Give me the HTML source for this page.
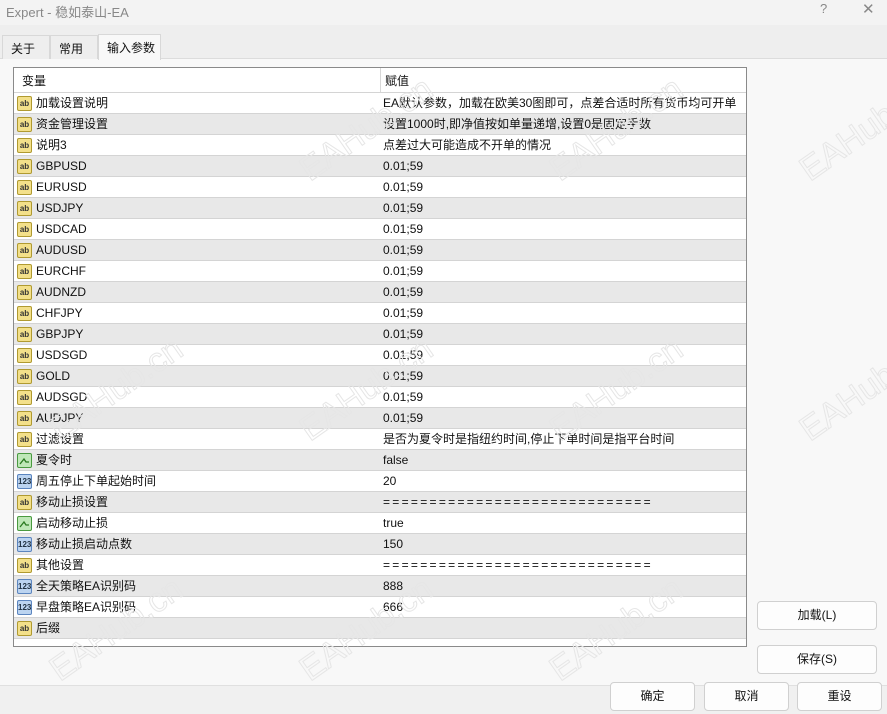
<!DOCTYPE html>
<html><head><meta charset="utf-8"><style>
*{margin:0;padding:0;box-sizing:border-box}
body{width:887px;height:714px;overflow:hidden;background:#f8f8f8;font-family:"Liberation Sans","Noto Sans CJK SC",sans-serif;font-size:12px;color:#111;position:relative}
.title{position:absolute;left:0;top:0;width:887px;height:25px;background:#f3f3f3;color:#888;font-size:13px;padding:2px 0 0 6px}
.tabbar{position:absolute;left:0;top:25px;width:887px;height:34px;background:#eeeeee;border-bottom:1px solid #dcdcdc}
.tab{position:absolute;top:10px;height:24px;border:1px solid #d8d8d8;border-bottom:none;background:#eeeeee;padding:4px 0 0 8px;font-size:12px}
.tab.on{background:#f8f8f8;top:9px;height:26px}
.tbl{position:absolute;left:13px;top:67px;width:734px;height:580px;border:1px solid #8a8a8a;background:#fff;overflow:hidden}
.row{position:absolute;left:0;width:732px;height:21px;border-bottom:1px solid #d4d4d4}
.row.g{background:#e8e8e8}
.n{position:absolute;left:22px;top:0;line-height:20px;white-space:nowrap}
.v{position:absolute;left:369px;top:0;line-height:20px;white-space:nowrap}
.eq{letter-spacing:2.3px}
.ic{position:absolute;left:3px;top:3px;width:15px;height:15px;border-radius:2px;font-size:8px;line-height:14px;text-align:center;font-weight:bold}
.ab{background:#f3e08a;border:1px solid #b09a30;color:#333}
.nm{background:#bcd4f0;border:1px solid #5b85bf;color:#234}
.bo{background:#bfe8b8;border:1px solid #4a9a40}
.hd{position:absolute;top:0;line-height:26px}
.vsep{position:absolute;left:366px;top:0;width:1px;height:24px;background:#d8d8d8}
.btn{position:absolute;height:29px;background:#fdfdfd;border:1px solid #d0d0d0;border-radius:4px;text-align:center;line-height:27px;font-size:12px}
.bottom{position:absolute;left:0;top:685px;width:887px;height:29px;background:#f0f0f0;border-top:1px solid #e0e0e0}
.wm{position:absolute;color:transparent;-webkit-text-stroke:1px #e6e6e6;font-size:34px;transform:rotate(-35deg);white-space:nowrap;font-family:"Liberation Sans",sans-serif}
</style></head><body>
<div class="title">Expert - 稳如泰山-EA<span style="position:absolute;left:820px;top:1px">?</span><span style="position:absolute;left:862px;top:0;font-size:15px">✕</span></div>
<div class="tabbar">
<div class="tab" style="left:2px;width:48px">关于</div>
<div class="tab" style="left:50px;width:48px">常用</div>
<div class="tab on" style="left:98px;width:63px">输入参数</div>
</div>
<div class="tbl">
<div class="row" style="top:0;height:25px;border-bottom:1px solid #d4d4d4"><span class="hd" style="left:8px">变量</span><div class="vsep"></div><span class="hd" style="left:371px">赋值</span></div>
<div id="rows"></div>
</div>
<div class="btn" style="left:757px;top:601px;width:120px">加载(L)</div>
<div class="btn" style="left:757px;top:645px;width:120px">保存(S)</div>
<div class="bottom"></div>
<div class="btn" style="left:610px;top:682px;width:85px">确定</div>
<div class="btn" style="left:704px;top:682px;width:85px">取消</div>
<div class="btn" style="left:797px;top:682px;width:85px">重设</div>
<div class="wm" style="left:290px;top:110px">EAHub.cn</div>
<div class="wm" style="left:540px;top:110px">EAHub.cn</div>
<div class="wm" style="left:790px;top:110px">EAHub.cn</div>
<div class="wm" style="left:40px;top:370px">EAHub.cn</div>
<div class="wm" style="left:290px;top:370px">EAHub.cn</div>
<div class="wm" style="left:540px;top:370px">EAHub.cn</div>
<div class="wm" style="left:790px;top:370px">EAHub.cn</div>
<div class="wm" style="left:40px;top:610px">EAHub.cn</div>
<div class="wm" style="left:290px;top:610px">EAHub.cn</div>
<div class="wm" style="left:540px;top:610px">EAHub.cn</div>
<script>
var E='<span class="eq">=============================</span>';
var d=[["a","加载设置说明","EA默认参数，加载在欧美30图即可，点差合适时所有货币均可开单"],["a","资金管理设置","设置1000时,即净值按如单量递增,设置0是固定手数"],["a","说明3","点差过大可能造成不开单的情况"],
["a","GBPUSD","0.01;59"],["a","EURUSD","0.01;59"],["a","USDJPY","0.01;59"],["a","USDCAD","0.01;59"],["a","AUDUSD","0.01;59"],["a","EURCHF","0.01;59"],["a","AUDNZD","0.01;59"],["a","CHFJPY","0.01;59"],["a","GBPJPY","0.01;59"],["a","USDSGD","0.01;59"],["a","GOLD","0.01;59"],["a","AUDSGD","0.01;59"],["a","AUDJPY","0.01;59"],
["a","过滤设置","是否为夏令时是指纽约时间,停止下单时间是指平台时间"],["b","夏令时","false"],["n","周五停止下单起始时间","20"],["a","移动止损设置",E],["b","启动移动止损","true"],["n","移动止损启动点数","150"],["a","其他设置",E],["n","全天策略EA识别码","888"],["n","早盘策略EA识别码","666"],["a","后缀",""]];
var h="";d.forEach(function(r,i){var ic=r[0]=="a"?'<div class="ic ab">ab</div>':r[0]=="n"?'<div class="ic nm">123</div>':'<div class="ic bo"><svg width="13" height="13"><path d="M2 10 L6 5 L8 8 L11 8" stroke="#2a7a20" fill="none" stroke-width="1.3"/></svg></div>';
h+='<div class="row'+(i%2?' g':'')+'" style="top:'+(25+i*21)+'px">'+ic+'<span class="n">'+r[1]+'</span><span class="v">'+r[2]+'</span></div>';});
document.getElementById("rows").outerHTML=h;
</script>
</body></html>
